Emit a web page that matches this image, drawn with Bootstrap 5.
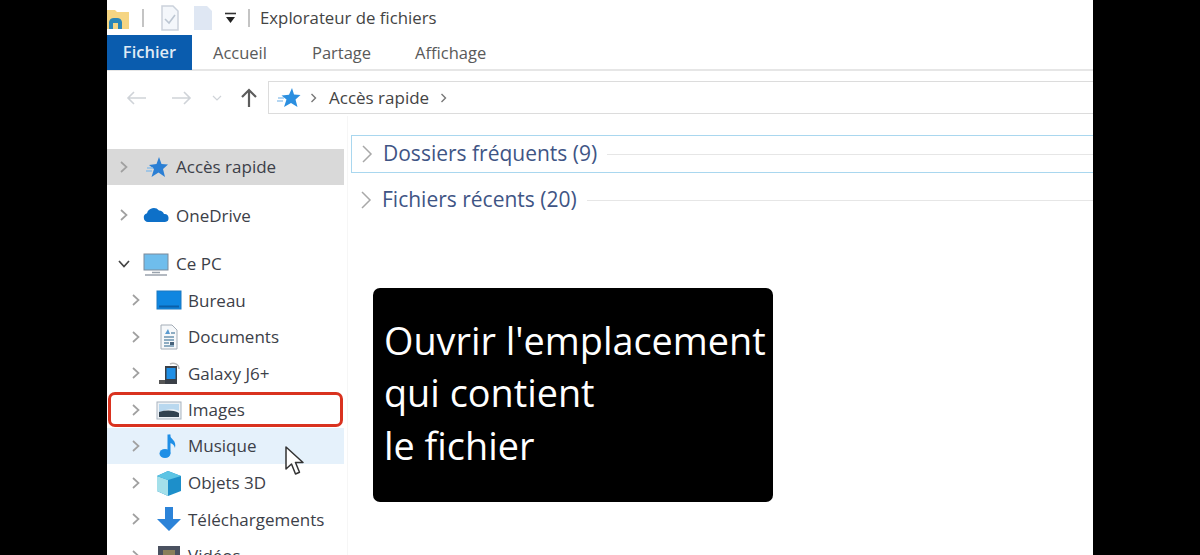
<!DOCTYPE html>
<html lang="fr">
<head>
<meta charset="UTF-8">
<title>Explorateur de fichiers</title>
<link rel="stylesheet" href="https://cdn.jsdelivr.net/npm/bootstrap@5.3.6/dist/css/bootstrap.min.css">
<style>
html, body { height: 555px; overflow: hidden; background: #000; }
body { font-family: "Open Sans", "Noto Sans", sans-serif; color: #3a3f4a; }
.win { width: 986px; height: 555px; margin-left: 107px; background: #fff; overflow: hidden; position: relative; }
.title-bar { height: 35px; font-size: 16.8px; color: #444; }
.sep-v { width: 2px; height: 18px; background: #c4c4c4; }
.tab-bar { height: 36px; border-bottom: 2px solid #e6e6e6; font-size: 16.5px; color: #5a5a5a; }
.tab-file { width: 85px; height: 35px; background: #0a5cae; color: #dfeaf5; font-weight: 600; }
.tab-lbl { padding-top: 2px; }
.addr-bar { height: 45px; padding-top: 10px; }
.addr-box { flex: 1; height: 33px; border: 1px solid #dcdcdc; border-right: 0; font-size: 17px; color: #444; }
.side { width: 237px; padding-top: 33px; font-size: 17px; flex: none; }
.side-row { height: 36.5px; color: #3c4048; }
.side-row.sel { background: #d9d9d9; height: 36px; margin-bottom: 12px; }
.side-row.gap-after { margin-bottom: 12px; }
.side-row.hov { background: #e5f1fb; margin-bottom: .5px; }
.side-row.pick { border: 3px solid #d9321f; border-radius: 7px; margin: 0 0 1px 1px; width: 235px; height: 35px; padding-top: 2px; }
.lvl1 { padding-left: 10px; }
.lvl2 { padding-left: 22px; }
.pick.lvl2 { padding-left: 18px; }
.chev { width: 16px; flex: none; margin-right: 4px; }
.ico { width: 26px; height: 26px; flex: none; margin: 0 7px 0 6px; }
.ico-in { margin: 0 6px 0 7px; }
.pane { flex: 1; padding: 19px 0 0 3px; border-left: 1px solid #f6f6f6; margin-left: 3px; }
.grp { height: 38px; font-size: 21px; color: #3f5585; padding-left: 9px; margin-bottom: 8px; }
.grp.on { border: 1px solid #a9d7ef; border-right: 0; }
.grp-line { flex: 1; height: 1px; background: #e6e6e6; margin-left: 10px; }
.tip-box { position: absolute; left: 266px; top: 288px; width: 400px; height: 214px; background: #000; border-radius: 7px; color: #fff; font-size: 37.8px; line-height: 52.5px; padding: 26.5px 0 0 11px; white-space: nowrap; }
.cursor { position: absolute; left: 177px; top: 446px; }
</style>
</head>
<body>
<div class="win">
  <div class="title-bar d-flex align-items-center">
    <svg width="24" height="24" viewBox="0 0 24 24" style="margin-left:-1px"><path d="M0 4h9l2 2h12v17H0z" fill="#f5d583"/><path d="M3 23v-7a5 5 0 0 1 5-4h3a5 5 0 0 1 5 4v7h-4v-6H7v6z" fill="#2a86b8"/></svg>
    <div class="sep-v" style="margin-left:12px"></div>
    <svg width="20" height="26" viewBox="0 0 20 26" style="margin-left:16px"><path d="M2 1h11l5 5v19H2z" fill="#f4f7fb" stroke="#cbd2dc" stroke-width="1.500"/><path d="M5 14l4 4 6-8" fill="none" stroke="#bcc6d2" stroke-width="1.600"/></svg>
    <svg width="20" height="26" viewBox="0 0 20 26" style="margin-left:13px"><path d="M1 1h13l5 5v19H1z" fill="#dfe7f3"/></svg>
    <svg width="11" height="12" viewBox="0 0 11 12" style="margin-left:12px"><path d="M0 1.500h11" stroke="#333" stroke-width="1.600"/><path d="M1 5h9L5.500 11z" fill="#222"/></svg>
    <div class="sep-v" style="margin-left:12px"></div>
    <span style="margin-left:10px">Explorateur de fichiers</span>
  </div>
  <div class="tab-bar d-flex align-items-center">
    <div class="tab-file d-flex align-items-center justify-content-center">Fichier</div>
    <span class="tab-lbl" style="margin-left:21px">Accueil</span>
    <span class="tab-lbl" style="margin-left:45px">Partage</span>
    <span class="tab-lbl" style="margin-left:44px">Affichage</span>
  </div>
  <div class="addr-bar d-flex">
    <div class="d-flex align-items-center" style="width:161px;height:33px;padding-left:18px">
      <svg width="22" height="16" viewBox="0 0 22 16"><path d="M21 8H3M9 2L3 8l6 6" fill="none" stroke="#cfd3d8" stroke-width="1.600"/></svg>
      <svg width="22" height="16" viewBox="0 0 22 16" class="ms-4"><path d="M1 8h18M13 2l6 6-6 6" fill="none" stroke="#cfd3d8" stroke-width="1.600"/></svg>
      <svg width="10" height="6" viewBox="0 0 10 6" style="margin-left:19px"><path d="M1 1l4 4 4-4" fill="none" stroke="#cfd3d8" stroke-width="1.200"/></svg>
      <svg width="20" height="20" viewBox="0 0 20 20" style="margin-left:17px"><path d="M10 19V2M3 9l7-7 7 7" fill="none" stroke="#5c5c5c" stroke-width="2.200"/></svg>
    </div>
    <div class="addr-box d-flex align-items-center">
      <svg width="24" height="22" viewBox="0 0 24 22" class="ms-2"><path d="M15 1l2 6.500 6.500.5-5 4.500 2 7.500-6.500-4-7 4 2.500-7.500-5-4 7.500-.8z" fill="#2b8fe0"/><path d="M1 11h6M0 14h6" stroke="#9cc9ee" stroke-width="1.500"/></svg>
      <svg width="8" height="10" viewBox="0 0 8 10" style="margin-left:9px"><path d="M1.500 1l4 4-4 4" fill="none" stroke="#777" stroke-width="1.400"/></svg>
      <span style="margin-left:11px">Accès rapide</span>
      <svg width="8" height="10" viewBox="0 0 8 10" style="margin-left:11px"><path d="M1.500 1l4 4-4 4" fill="none" stroke="#777" stroke-width="1.400"/></svg>
    </div>
  </div>
  <div class="d-flex">
    <div class="side">
      <div class="side-row sel lvl1 d-flex align-items-center">
        <svg class="chev" width="16" height="14" viewBox="0 0 16 14"><path d="M4 2l5.500 5L4 12" fill="none" stroke="#a0a0a0" stroke-width="1.700"/></svg>
        <svg class="ico" viewBox="0 0 26 26"><path d="M16 3l2.500 7 6.500.5-5 4.500 2 8-6.500-4.500-7 4.500 2.500-8-5-4 7.500-1z" fill="#2b7fd4"/><path d="M4 14h6M3 17h6" stroke="#8fbfe8" stroke-width="1.500"/></svg>
        <span>Accès rapide</span>
      </div>
      <div class="side-row gap-after lvl1 d-flex align-items-center">
        <svg class="chev" width="16" height="14" viewBox="0 0 16 14"><path d="M4 2l5.500 5L4 12" fill="none" stroke="#a0a0a0" stroke-width="1.700"/></svg>
        <svg class="ico" viewBox="0 0 26 26"><path d="M5 20a4.500 4.500 0 0 1-1-8.800A7 7 0 0 1 16 8.500a5.500 5.500 0 0 1 5 3.500 4 4 0 0 1 1 8z" fill="#0e70c8"/></svg>
        <span>OneDrive</span>
      </div>
      <div class="side-row lvl1 d-flex align-items-center">
        <svg class="chev" width="16" height="14" viewBox="0 0 16 14"><path d="M2 4l5 5.500L12 4" fill="none" stroke="#444" stroke-width="1.700"/></svg>
        <svg class="ico" viewBox="0 0 26 26"><rect x="1" y="3" width="24" height="16" fill="#6fbdec" stroke="#7d8a99"/><path d="M9 21.500h8M2 24h22" stroke="#9aa3ad" stroke-width="1.500"/></svg>
        <span>Ce PC</span>
      </div>
      <div class="side-row lvl2 d-flex align-items-center">
        <svg class="chev" width="16" height="14" viewBox="0 0 16 14"><path d="M4 2l5.500 5L4 12" fill="none" stroke="#a0a0a0" stroke-width="1.700"/></svg>
        <svg class="ico ico-in" viewBox="0 0 26 26"><rect x="1" y="4" width="24" height="18" fill="#0f86e0" stroke="#1a78c2"/><path d="M3 19.500h20" stroke="#0b5fa8" stroke-width="2"/></svg>
        <span>Bureau</span>
      </div>
      <div class="side-row lvl2 d-flex align-items-center">
        <svg class="chev" width="16" height="14" viewBox="0 0 16 14"><path d="M4 2l5.500 5L4 12" fill="none" stroke="#a0a0a0" stroke-width="1.700"/></svg>
        <svg class="ico ico-in" viewBox="0 0 26 26"><path d="M5 1h11l5 5v19H5z" fill="#f6f8fa" stroke="#a4adb7"/><path d="M12 5l-3 5h5z" fill="#5b9bd0"/><path d="M15 9h4M8 13h10M8 16h10M8 19h5M8 22h10" stroke="#6b93b0" stroke-width="1.300"/><rect x="14" y="18" width="4" height="3" fill="#47627a"/></svg>
        <span>Documents</span>
      </div>
      <div class="side-row lvl2 d-flex align-items-center">
        <svg class="chev" width="16" height="14" viewBox="0 0 16 14"><path d="M4 2l5.500 5L4 12" fill="none" stroke="#a0a0a0" stroke-width="1.700"/></svg>
        <svg class="ico ico-in" viewBox="0 0 26 26"><path d="M14 4a6 6 0 0 1 9 5" fill="none" stroke="#bbb" stroke-width="1.500"/><rect x="9" y="6" width="12" height="18" fill="#3a3f47"/><rect x="10.500" y="8" width="9" height="11" fill="#1f8fe6"/><rect x="3" y="20" width="6" height="4" fill="#555"/></svg>
        <span>Galaxy J6+</span>
      </div>
      <div class="side-row pick lvl2 d-flex align-items-center">
        <svg class="chev" width="16" height="14" viewBox="0 0 16 14"><path d="M4 2l5.500 5L4 12" fill="none" stroke="#a0a0a0" stroke-width="1.700"/></svg>
        <svg class="ico ico-in" viewBox="0 0 26 26"><rect x="1" y="5" width="24" height="17" fill="#eef2f6" stroke="#a9b4bf"/><path d="M3 7h20v7c-6-3-12-2-20 1z" fill="#b9d8ef"/><path d="M3 15c7-2 14-2 20 1v4H3z" fill="#32424f"/></svg>
        <span>Images</span>
      </div>
      <div class="side-row hov lvl2 d-flex align-items-center">
        <svg class="chev" width="16" height="14" viewBox="0 0 16 14"><path d="M4 2l5.500 5L4 12" fill="none" stroke="#a0a0a0" stroke-width="1.700"/></svg>
        <svg class="ico ico-in" viewBox="0 0 26 26"><path d="M13 1.500v19" stroke="#1f8fe6" stroke-width="3"/><ellipse cx="9" cy="20.500" rx="5.500" ry="4.500" fill="#1f8fe6"/><path d="M13 1c1 5 8 6 6 14-1-4-4-5-6-5z" fill="#1f8fe6"/></svg>
        <span>Musique</span>
      </div>
      <div class="side-row lvl2 d-flex align-items-center">
        <svg class="chev" width="16" height="14" viewBox="0 0 16 14"><path d="M4 2l5.500 5L4 12" fill="none" stroke="#a0a0a0" stroke-width="1.700"/></svg>
        <svg class="ico ico-in" viewBox="0 0 26 26"><path d="M1 6l11-5 13 5v15l-13 5-11-5z" fill="#1d8fca"/><path d="M1 6l11 4v16L1 21z" fill="#a4e0ea"/><path d="M1 6l11-5 13 5-13 4z" fill="#5cc4e4"/></svg>
        <span>Objets 3D</span>
      </div>
      <div class="side-row lvl2 d-flex align-items-center">
        <svg class="chev" width="16" height="14" viewBox="0 0 16 14"><path d="M4 2l5.500 5L4 12" fill="none" stroke="#a0a0a0" stroke-width="1.700"/></svg>
        <svg class="ico ico-in" viewBox="0 0 26 26"><path d="M9 1h8v12h8L13 25 1 13h8z" fill="#2c83d8"/></svg>
        <span>Téléchargements</span>
      </div>
      <div class="side-row lvl2 d-flex align-items-center">
        <svg class="chev" width="16" height="14" viewBox="0 0 16 14"><path d="M4 2l5.500 5L4 12" fill="none" stroke="#a0a0a0" stroke-width="1.700"/></svg>
        <svg class="ico ico-in" viewBox="0 0 26 26"><rect x="2" y="3" width="22" height="20" fill="#4a5160"/><rect x="7" y="7" width="12" height="12" fill="#8a7f5a"/></svg>
        <span>Vidéos</span>
      </div>
    </div>
    <div class="pane">
      <div class="grp on d-flex align-items-center">
        <svg width="14" height="20" viewBox="0 0 14 20" class="me-2"><path d="M2 2l8 8-8 8" fill="none" stroke="#a8a8a8" stroke-width="1.500"/></svg>
        <span>Dossiers fréquents (9)</span><div class="grp-line"></div>
      </div>
      <div class="grp d-flex align-items-center">
        <svg width="14" height="20" viewBox="0 0 14 20" class="me-2"><path d="M2 2l8 8-8 8" fill="none" stroke="#a8a8a8" stroke-width="1.500"/></svg>
        <span>Fichiers récents (20)</span><div class="grp-line"></div>
      </div>
    </div>
  </div>
  <div class="tip-box">Ouvrir l'emplacement<br>qui contient<br>le fichier</div>
  <svg class="cursor" width="22" height="30" viewBox="0 0 22 30"><path d="M2 1v22l5.500-5 4 10 4-1.800-4-9.700h7.500z" fill="#fff" stroke="#333" stroke-width="1.500" stroke-linejoin="round"/></svg>
</div>
<script src="https://cdn.jsdelivr.net/npm/bootstrap@5.3.6/dist/js/bootstrap.bundle.min.js"></script>
</body>
</html>
